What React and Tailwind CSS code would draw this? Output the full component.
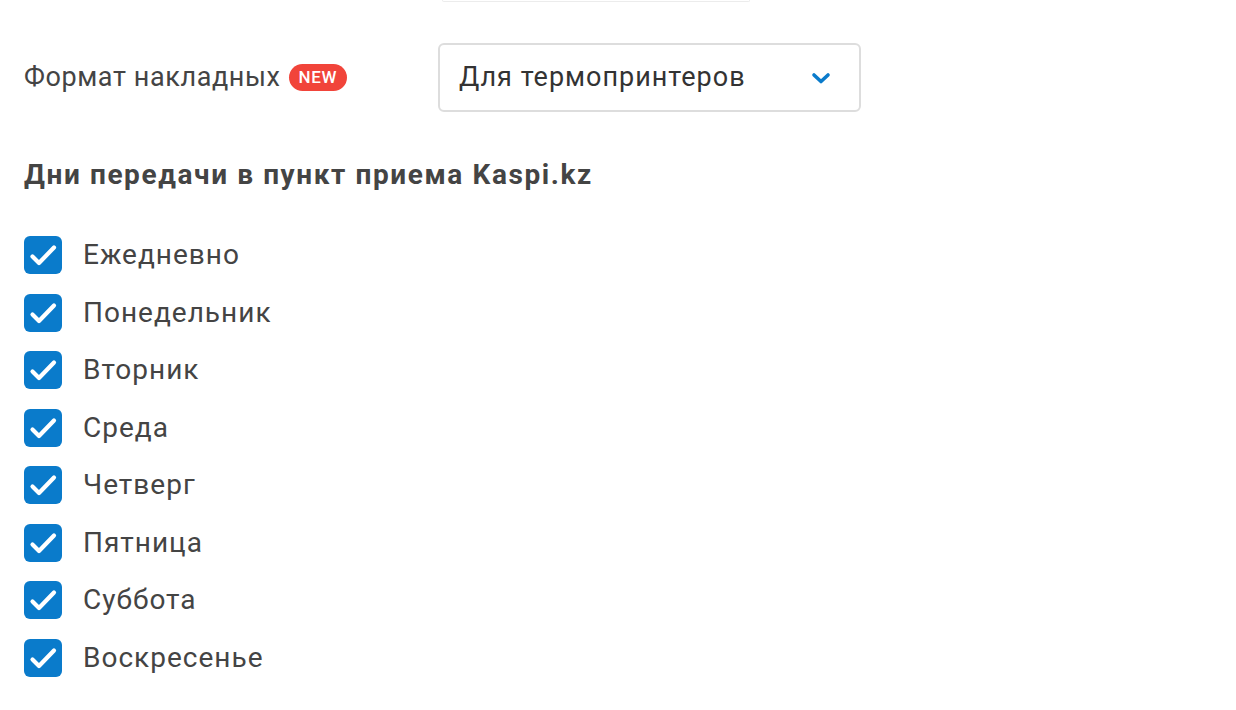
import React from 'react';

const days = [
  'Ежедневно',
  'Понедельник',
  'Вторник',
  'Среда',
  'Четверг',
  'Пятница',
  'Суббота',
  'Воскресенье',
];

const Check = () => (
  <span className="w-[38px] h-[38px] rounded-[6px] bg-[#0a7bcb] shrink-0">
    <svg width="38" height="38" viewBox="0 0 38 38" fill="none">
      <path d="M8.5 20.5l6.5 6.5L30 11.5" stroke="white" strokeWidth="4.2" strokeLinecap="round" strokeLinejoin="round" />
    </svg>
  </span>
);

const App = () => {
  return (
    <div className="min-h-screen bg-white text-[#444] font-['Roboto',sans-serif]">
      <div className="ml-[442px] w-[308px] h-[2px] border-b border-x border-[#ececec] rounded-b-[4px]" />

      <div className="pl-6 pt-[41px] flex items-center">
        <div className="w-[414px] flex items-center gap-[8px]">
          <span className="text-[27px] leading-none tracking-[0.6px]">Формат накладных</span>
          <span className="bg-[#f1443a] text-white text-[17px] font-medium tracking-[0.6px] rounded-full px-[10px] h-[27px] flex items-center leading-none">NEW</span>
        </div>
        <button className="w-[423px] h-[69px] border-2 border-[#ddd] rounded-[6px] flex items-center justify-between pl-[19px] pr-[26px]">
          <span className="text-[27px] tracking-[1px] text-[#333]">Для термопринтеров</span>
          <svg width="24" height="24" viewBox="0 0 24 24" fill="none">
            <path d="M5 9l7 6.5L19 9" stroke="#0a7bcb" strokeWidth="3.6" strokeLinecap="round" strokeLinejoin="round" />
          </svg>
        </button>
      </div>

      <h2 className="pl-6 mt-[49px] text-[28px] font-bold leading-none tracking-[1.6px]">
        Дни передачи в пункт приема Kaspi.kz
      </h2>

      <div className="pl-6 mt-[47px] flex flex-col gap-[19.5px]">
        {days.map((d) => (
          <label key={d} className="flex items-center gap-[21px]">
            <Check />
            <span className="text-[28px] leading-none tracking-[1px]">{d}</span>
          </label>
        ))}
      </div>
    </div>
  );
};

export default App;
